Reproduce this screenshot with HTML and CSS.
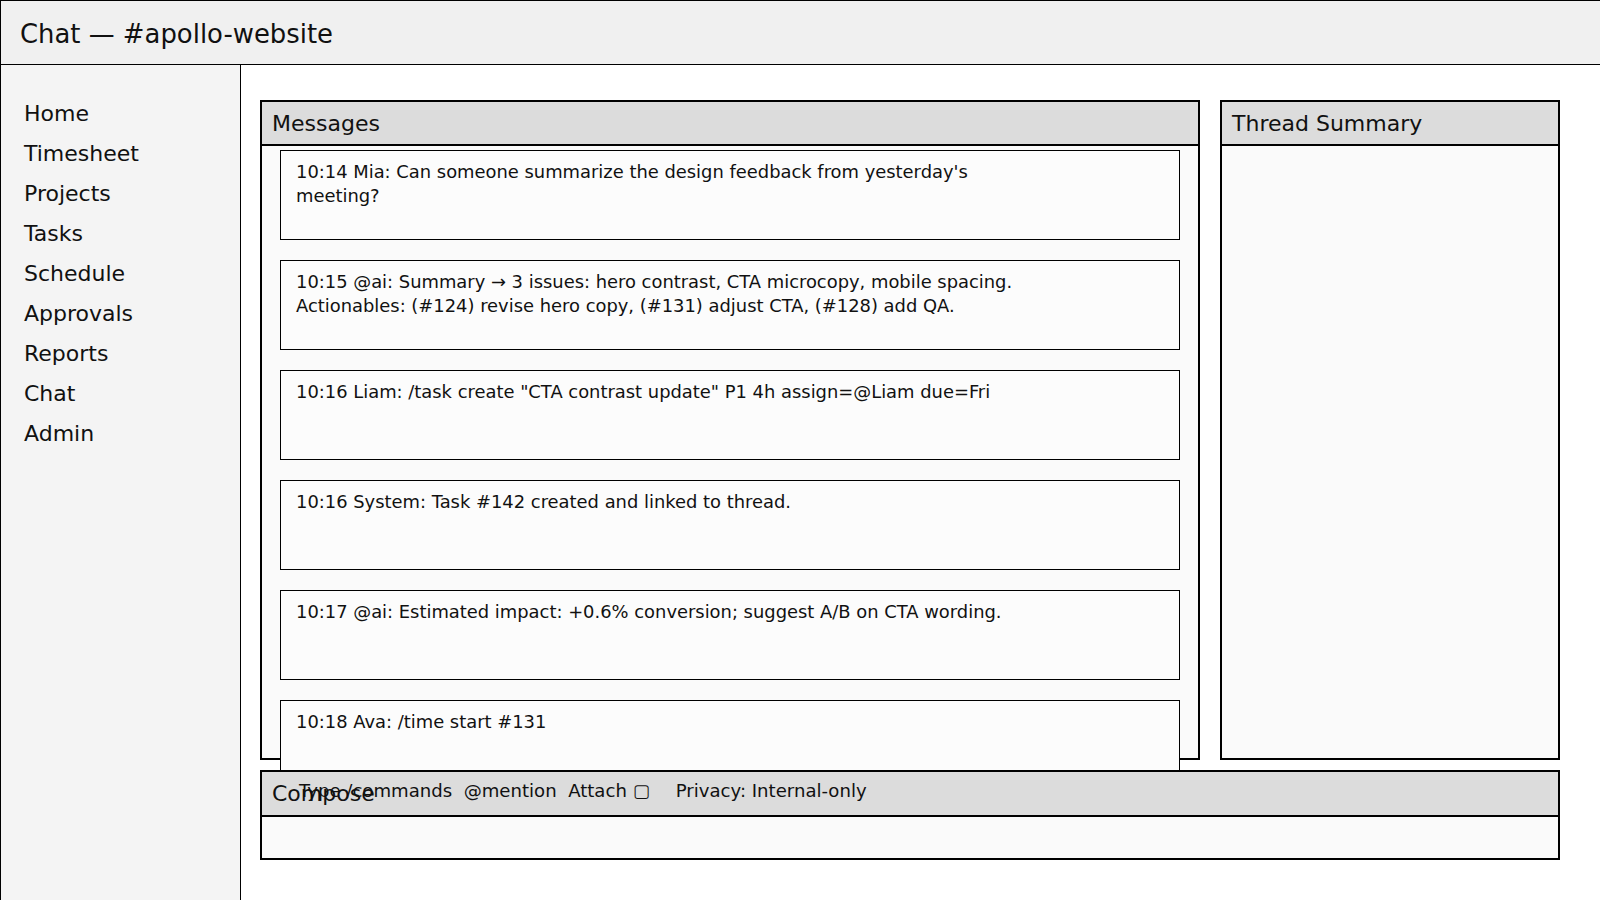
FILE: index.html
```html
<!DOCTYPE html>
<html lang="en">
<head>
<meta charset="utf-8">
<title>Chat — #apollo-website</title>
<link rel="stylesheet" href="styles.css">
</head>
<body>
<div class="app">
  <header class="topbar">
    <h1 class="title">Chat — #apollo-website</h1>
  </header>
  <nav class="sidebar">
    <ul class="nav">
      <li class="nav-item">Home</li>
      <li class="nav-item">Timesheet</li>
      <li class="nav-item">Projects</li>
      <li class="nav-item">Tasks</li>
      <li class="nav-item">Schedule</li>
      <li class="nav-item">Approvals</li>
      <li class="nav-item">Reports</li>
      <li class="nav-item">Chat</li>
      <li class="nav-item">Admin</li>
    </ul>
  </nav>
  <main class="main">
    <section class="panel messages">
      <div class="panel-header">Messages</div>
      <div class="panel-body messages-body">
        <div class="msg"><p class="msg-text">10:14 Mia: Can someone summarize the design feedback from yesterday's meeting?</p></div>
        <div class="msg"><p class="msg-text">10:15 @ai: Summary → 3 issues: hero contrast, CTA microcopy, mobile spacing. Actionables: (#124) revise hero copy, (#131) adjust CTA, (#128) add QA.</p></div>
        <div class="msg"><p class="msg-text">10:16 Liam: /task create "CTA contrast update" P1 4h assign=@Liam due=Fri</p></div>
        <div class="msg"><p class="msg-text">10:16 System: Task #142 created and linked to thread.</p></div>
        <div class="msg"><p class="msg-text">10:17 @ai: Estimated impact: +0.6% conversion; suggest A/B on CTA wording.</p></div>
        <div class="msg"><p class="msg-text">10:18 Ava: /time start #131</p></div>
      </div>
    </section>
    <section class="panel summary">
      <div class="panel-header">Thread Summary</div>
      <div class="panel-body"></div>
    </section>
    <section class="panel compose">
      <div class="panel-header compose-header">Compose</div>
      <div class="panel-body compose-body"></div>
      <div class="compose-toolbar">Type /commands  @mention  Attach ▢<span class="privacy">Privacy: Internal-only</span></div>
    </section>
  </main>
</div>
</body>
</html>
```
FILE: styles.css
```css
html, body {
  margin: 0;
  padding: 0;
  background: #ffffff;
}

body {
  font-family: "DejaVu Sans", "Noto Sans", sans-serif;
  color: #111111;
}

.app {
  box-sizing: border-box;
  height: 900px;
  display: grid;
  grid-template-columns: 240px 1fr;
  grid-template-rows: 64px 1fr;
  border-left: 1px solid #000;
  border-top: 1px solid #000;
  overflow: hidden;
}

.topbar {
  grid-column: 1 / -1;
  box-sizing: border-box;
  background: #f0f0f0;
  border-bottom: 1px solid #000;
  padding: 18px 0 0 19px;
}

.title {
  margin: 0;
  font-size: 25.9px;
  line-height: 30px;
  font-weight: normal;
}

.sidebar {
  box-sizing: border-box;
  background: #f4f4f4;
  border-right: 1px solid #000;
  padding: 29px 0 0 23px;
}

.nav {
  list-style: none;
  margin: 0;
  padding: 0;
}

.nav-item {
  font-size: 22px;
  line-height: 40px;
}

.main {
  display: grid;
  grid-template-columns: 940px 340px;
  grid-template-rows: 660px 90px;
  column-gap: 20px;
  row-gap: 10px;
  padding: 35px 0 0 19px;
  align-content: start;
}

.panel {
  box-sizing: border-box;
  border: 2px solid #000;
  display: flex;
  flex-direction: column;
  background: #fafafa;
}

.panel-header {
  flex: none;
  height: 42px;
  line-height: 44px;
  padding: 0 10px;
  font-size: 22px;
  background: #dcdcdc;
  border-bottom: 2px solid #000;
  overflow: visible;
}

.compose-header {
  height: 43px;
}

.panel-body {
  flex: 1;
  background: #fafafa;
}

.messages-body {
  padding: 4px 18px 0;
  display: flex;
  flex-direction: column;
  gap: 20px;
  min-height: 0;
}

.msg {
  flex: none;
  box-sizing: border-box;
  height: 90px;
  border: 1px solid #000;
  background: #fcfcfc;
  padding: 8.5px 15px;
}

.msg-text {
  margin: 0;
  max-width: 745px;
  font-size: 17.9px;
  line-height: 24px;
}

.compose {
  grid-column: 1 / -1;
  position: relative;
  z-index: 1;
}

.compose-body {
  height: 41px;
}

.compose-toolbar {
  position: absolute;
  left: 37px;
  top: 7px;
  font-size: 18.1px;
  line-height: 23.4px;
  white-space: pre;
}

.privacy {
  margin-left: 26px;
}
```
